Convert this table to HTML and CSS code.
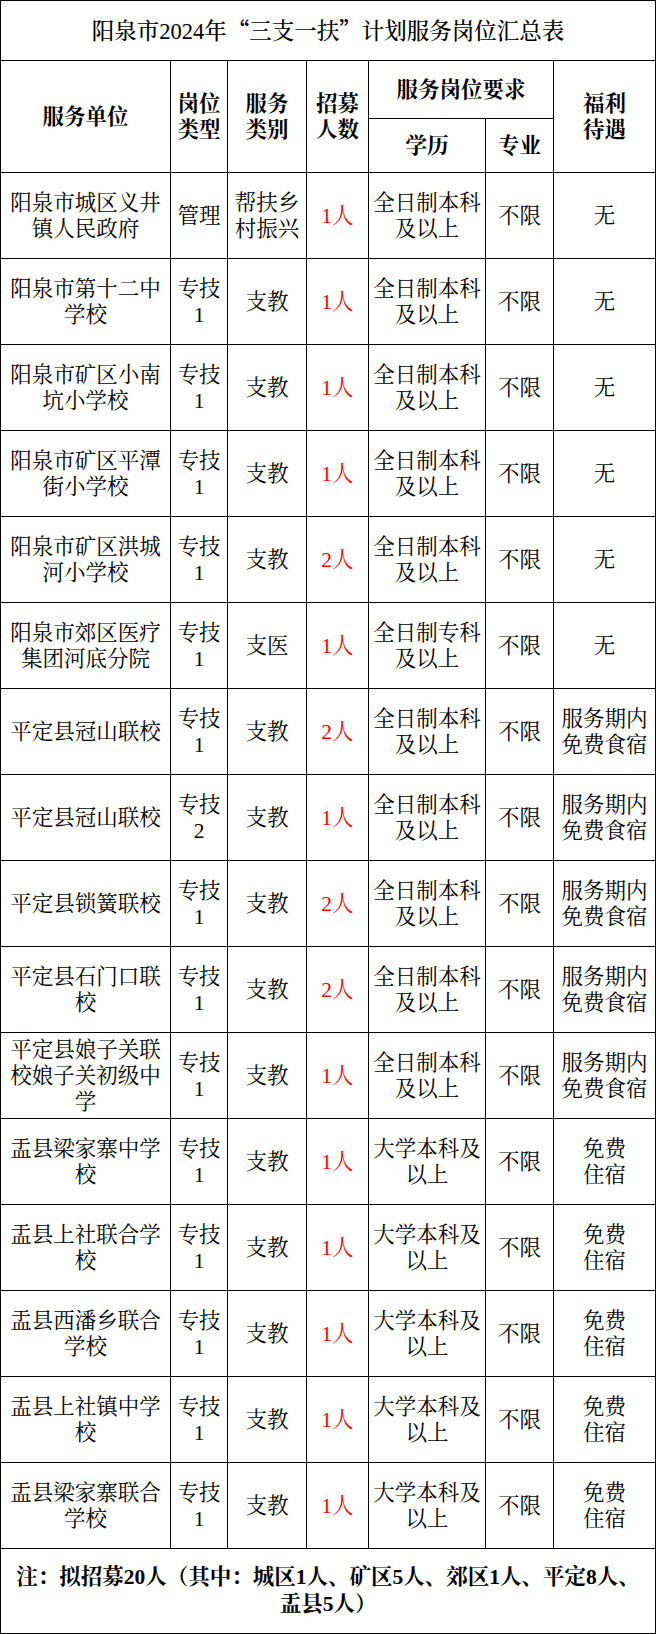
FILE: index.html
```html
<!DOCTYPE html>
<html lang="zh-CN">
<head>
<meta charset="utf-8">
<title>阳泉市2024年“三支一扶”计划服务岗位汇总表</title>
<link rel="stylesheet" href="styles.css">
</head>
<body>
<table class="sheet">
  <colgroup>
    <col class="c-unit">
    <col class="c-type">
    <col class="c-cat">
    <col class="c-num">
    <col class="c-edu">
    <col class="c-major">
    <col class="c-welfare">
  </colgroup>
  <thead>
    <tr class="r-title"><th colspan="7" class="title">阳泉市2024年<span class="cjk">“</span>三支一扶<span class="cjk">”</span>计划服务岗位汇总表</th></tr>
    <tr class="r-head1">
      <th rowspan="2" class="head">服务单位</th>
      <th rowspan="2" class="head">岗位<br>类型</th>
      <th rowspan="2" class="head">服务<br>类别</th>
      <th rowspan="2" class="head">招募<br>人数</th>
      <th colspan="2" class="head">服务岗位要求</th>
      <th rowspan="2" class="head">福利<br>待遇</th>
    </tr>
    <tr class="r-head2">
      <th class="head">学历</th>
      <th class="head">专业</th>
    </tr>
  </thead>
  <tbody>
    <tr><td>阳泉市城区义井<br>镇人民政府</td><td>管理</td><td>帮扶乡<br>村振兴</td><td class="red">1人</td><td>全日制本科<br>及以上</td><td>不限</td><td>无</td></tr>
    <tr><td>阳泉市第十二中<br>学校</td><td>专技<br>1</td><td>支教</td><td class="red">1人</td><td>全日制本科<br>及以上</td><td>不限</td><td>无</td></tr>
    <tr><td>阳泉市矿区小南<br>坑小学校</td><td>专技<br>1</td><td>支教</td><td class="red">1人</td><td>全日制本科<br>及以上</td><td>不限</td><td>无</td></tr>
    <tr><td>阳泉市矿区平潭<br>街小学校</td><td>专技<br>1</td><td>支教</td><td class="red">1人</td><td>全日制本科<br>及以上</td><td>不限</td><td>无</td></tr>
    <tr><td>阳泉市矿区洪城<br>河小学校</td><td>专技<br>1</td><td>支教</td><td class="red">2人</td><td>全日制本科<br>及以上</td><td>不限</td><td>无</td></tr>
    <tr><td>阳泉市郊区医疗<br>集团河底分院</td><td>专技<br>1</td><td>支医</td><td class="red">1人</td><td>全日制专科<br>及以上</td><td>不限</td><td>无</td></tr>
    <tr><td>平定县冠山联校</td><td>专技<br>1</td><td>支教</td><td class="red">2人</td><td>全日制本科<br>及以上</td><td>不限</td><td>服务期内<br>免费食宿</td></tr>
    <tr><td>平定县冠山联校</td><td>专技<br>2</td><td>支教</td><td class="red">1人</td><td>全日制本科<br>及以上</td><td>不限</td><td>服务期内<br>免费食宿</td></tr>
    <tr><td>平定县锁簧联校</td><td>专技<br>1</td><td>支教</td><td class="red">2人</td><td>全日制本科<br>及以上</td><td>不限</td><td>服务期内<br>免费食宿</td></tr>
    <tr><td>平定县石门口联<br>校</td><td>专技<br>1</td><td>支教</td><td class="red">2人</td><td>全日制本科<br>及以上</td><td>不限</td><td>服务期内<br>免费食宿</td></tr>
    <tr><td>平定县娘子关联<br>校娘子关初级中<br>学</td><td>专技<br>1</td><td>支教</td><td class="red">1人</td><td>全日制本科<br>及以上</td><td>不限</td><td>服务期内<br>免费食宿</td></tr>
    <tr><td>盂县梁家寨中学<br>校</td><td>专技<br>1</td><td>支教</td><td class="red">1人</td><td>大学本科及<br>以上</td><td>不限</td><td>免费<br>住宿</td></tr>
    <tr><td>盂县上社联合学<br>校</td><td>专技<br>1</td><td>支教</td><td class="red">1人</td><td>大学本科及<br>以上</td><td>不限</td><td>免费<br>住宿</td></tr>
    <tr><td>盂县西潘乡联合<br>学校</td><td>专技<br>1</td><td>支教</td><td class="red">1人</td><td>大学本科及<br>以上</td><td>不限</td><td>免费<br>住宿</td></tr>
    <tr><td>盂县上社镇中学<br>校</td><td>专技<br>1</td><td>支教</td><td class="red">1人</td><td>大学本科及<br>以上</td><td>不限</td><td>免费<br>住宿</td></tr>
    <tr><td>盂县梁家寨联合<br>学校</td><td>专技<br>1</td><td>支教</td><td class="red">1人</td><td>大学本科及<br>以上</td><td>不限</td><td>免费<br>住宿</td></tr>
  </tbody>
  <tfoot>
    <tr class="r-note"><td colspan="7" class="note">注：拟招募20人（其中：城区1人、矿区5人、郊区1人、平定8人、<br>盂县5人）</td></tr>
  </tfoot>
</table>
</body>
</html>
```
FILE: styles.css
```css
html, body {
  margin: 0;
  padding: 0;
  background: #ffffff;
}

body {
  font-family: "Liberation Serif", "Noto Serif CJK SC", "Noto Sans CJK SC", serif;
  color: #000000;
  font-size: 21.5px;
  line-height: 26px;
}

.sheet {
  width: 656px;
  border-collapse: collapse;
  table-layout: fixed;
}

.sheet th,
.sheet td {
  border: 1px solid #000000;
  padding: 0;
  text-align: center;
  vertical-align: middle;
  font-weight: normal;
}

.c-unit { width: 170px; }
.c-type { width: 57px; }
.c-cat { width: 79px; }
.c-num { width: 62px; }
.c-edu { width: 117px; }
.c-major { width: 68px; }
.c-welfare { width: 102px; }

.r-title { height: 60px; }
.r-head1 { height: 58px; }
.r-head2 { height: 54px; }
.sheet tbody tr { height: 86px; }
.r-note { height: 85px; }

.sheet .title {
  font-size: 22.5px;
  font-weight: 500;
}

.cjk {
  font-family: "Noto Sans CJK SC", sans-serif;
}

.sheet .head {
  font-weight: bold;
}

.red {
  color: #ff0000;
}

.sheet .note {
  font-weight: bold;
  line-height: 27px;
}
```
